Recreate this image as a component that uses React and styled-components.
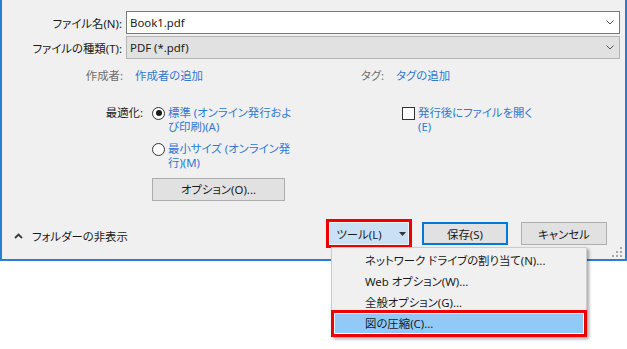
import React from 'react'
import styled, { createGlobalStyle } from 'styled-components'

const GlobalStyle = createGlobalStyle`
  html, body {
    margin: 0;
    padding: 0;
    background: #ffffff;
  }
  body {
    font-family: "Noto Sans", "Noto Sans CJK JP", sans-serif;
    font-size: 11.4px;
    color: #1a1a1a;
    font-feature-settings: "palt";
  }
`

const Page = styled.div`
  width: 627px;
  height: 349px;
  overflow: hidden;
  background: #ffffff;
`

const Dialog = styled.div`
  position: relative;
  width: 627px;
  height: 261px;
  box-sizing: border-box;
  background: #f0f0f0;
  border: 2px solid #2b7cd3;
  border-top: none;
  padding: 11px 5px 14px 0;
  display: flex;
  flex-direction: column;
`

const FieldGrid = styled.div`
  display: grid;
  grid-template-columns: 120px 1fr;
  column-gap: 4px;
  row-gap: 2px;
  align-items: center;
`

const Label = styled.label`
  text-align: right;
  white-space: nowrap;
  color: ${p => (p.$muted ? '#6d6d6d' : '#1a1a1a')};
`

const Field = styled.div`
  height: 23px;
  box-sizing: border-box;
  display: flex;
  align-items: center;
  justify-content: space-between;
  padding: 0 5px 0 3px;
  background: ${p => (p.$readonly ? '#e1e1e1' : '#ffffff')};
  border: 1px solid ${p => (p.$readonly ? '#b4b4b4' : '#7a7a7a')};
`

const MetaRow = styled.div`
  margin-top: 9px;
  display: grid;
  grid-template-columns: 121px 200px 37px 1fr;
  column-gap: 12px;
  line-height: 16px;
`

const Link = styled.span`
  color: #2f78cf;
  white-space: nowrap;
`

const OptionsRow = styled.div`
  margin-top: 22px;
  display: grid;
  grid-template-columns: 141px 241px 1fr;
  column-gap: 9px;
  line-height: 14px;
  align-items: start;
`

const RadioGroup = styled.div`
  display: flex;
  flex-direction: column;
  gap: 8px;
`

const Choice = styled.div`
  display: flex;
  align-items: flex-start;
  gap: 3px;
  white-space: nowrap;
`

const Radio = styled.span`
  flex: none;
  width: 13px;
  height: 13px;
  box-sizing: border-box;
  border: 1px solid #333333;
  border-radius: 50%;
  background: #ffffff;
  display: flex;
  align-items: center;
  justify-content: center;
  margin-top: 0.5px;
  &::after {
    content: '';
    width: 6px;
    height: 6px;
    border-radius: 50%;
    background: ${p => (p.$checked ? '#1a1a1a' : 'transparent')};
  }
`

const Checkbox = styled.span`
  flex: none;
  width: 13px;
  height: 13px;
  box-sizing: border-box;
  border: 1px solid #333333;
  background: #ffffff;
  margin-top: 0.5px;
`

const Button = styled.button`
  font: inherit;
  color: #1a1a1a;
  height: 23px;
  width: ${p => p.$width}px;
  box-sizing: border-box;
  padding: 0;
  background: ${p => (p.$active ? '#c9e0f5' : '#e1e1e1')};
  border: ${p =>
    p.$default ? '2px solid #0078d7' : p.$active ? '1px solid #e8f2fb' : '1px solid #adadad'};
  outline: ${p => (p.$marked ? '3px solid #ee0000' : 'none')};
  display: flex;
  align-items: center;
  justify-content: center;
  gap: ${p => (p.$active ? '17px' : '0')};
  padding-left: ${p => (p.$active ? '4px' : '0')};
`

const OptionButton = styled(Button)`
  margin-top: 8px;
`

const Footer = styled.div`
  margin-top: auto;
  display: flex;
  align-items: center;
  padding-right: 13px;
`

const Toggle = styled.div`
  display: flex;
  align-items: center;
  gap: 9px;
  padding-left: 12px;
  margin-top: 5px;
`

const Actions = styled.div`
  margin-left: auto;
  display: flex;
  gap: 13px;
`

const ToolWrap = styled.div`
  position: relative;
`

const Menu = styled.ul`
  position: absolute;
  top: calc(100% + 2px);
  left: 2px;
  width: 256px;
  margin: 0;
  padding: 2px;
  box-sizing: border-box;
  list-style: none;
  background: #f0f0f0;
  border: 1px solid #cccccc;
  box-shadow: 2px 2px 3px rgba(0, 0, 0, 0.35);
  z-index: 2;
`

const MenuItem = styled.li`
  height: 21px;
  line-height: 21px;
  padding-left: 31px;
  white-space: nowrap;
  background: ${p => (p.$selected ? '#91c9f7' : 'transparent')};
  box-shadow: ${p => (p.$selected ? 'inset 0 0 0 1px #eef6fd' : 'none')};
  outline: ${p => (p.$selected ? '3px solid #ee0000' : 'none')};
`

const Grip = styled.svg`
  position: absolute;
  right: 3px;
  bottom: 2px;
`

const ChevronDown = () => (
  <svg width="8" height="5" viewBox="0 0 8 5">
    <path d="M0.5 0.5 L4 4 L7.5 0.5" fill="none" stroke="#555" strokeWidth="1" />
  </svg>
)

const ChevronUp = () => (
  <svg width="9" height="6" viewBox="0 0 9 6">
    <path d="M1 5 L4.5 1.5 L8 5" fill="none" stroke="#3a3a3a" strokeWidth="1.8" />
  </svg>
)

const Caret = () => (
  <svg width="7" height="4" viewBox="0 0 7 4">
    <polygon points="0,0 7,0 3.5,4" fill="#333" />
  </svg>
)

const App = () => {
  return (
    <Page>
      <GlobalStyle />
      <Dialog>
        <FieldGrid>
          <Label>ファイル名(N):</Label>
          <Field>
            <span>Book1.pdf</span>
            <ChevronDown />
          </Field>
          <Label>ファイルの種類(T):</Label>
          <Field $readonly>
            <span>PDF (*.pdf)</span>
            <ChevronDown />
          </Field>
        </FieldGrid>

        <MetaRow>
          <Label $muted>作成者:</Label>
          <Link>作成者の追加</Link>
          <Label $muted>タグ:</Label>
          <Link>タグの追加</Link>
        </MetaRow>

        <OptionsRow>
          <Label>最適化:</Label>
          <div>
            <RadioGroup>
              <Choice>
                <Radio $checked />
                <Link>標準 (オンライン発行およ<br />び印刷)(A)</Link>
              </Choice>
              <Choice>
                <Radio />
                <Link>最小サイズ (オンライン発<br />行)(M)</Link>
              </Choice>
            </RadioGroup>
            <OptionButton $width={133}>オプション(O)...</OptionButton>
          </div>
          <Choice>
            <Checkbox />
            <Link>発行後にファイルを開く<br />(E)</Link>
          </Choice>
        </OptionsRow>

        <Footer>
          <Toggle>
            <ChevronUp />
            <span>フォルダーの非表示</span>
          </Toggle>
          <Actions>
            <ToolWrap>
              <Button $width={80} $active $marked>
                <span>ツール(L)</span>
                <Caret />
              </Button>
              <Menu>
                <MenuItem>ネットワーク ドライブの割り当て(N)...</MenuItem>
                <MenuItem>Web オプション(W)...</MenuItem>
                <MenuItem>全般オプション(G)...</MenuItem>
                <MenuItem $selected>図の圧縮(C)...</MenuItem>
              </Menu>
            </ToolWrap>
            <Button $width={86} $default>保存(S)</Button>
            <Button $width={86}>キャンセル</Button>
          </Actions>
        </Footer>

        <Grip width="10" height="10" viewBox="0 0 10 10">
          <rect x="8" y="0" width="2" height="2" fill="#a8a8a8" />
          <rect x="4" y="4" width="2" height="2" fill="#a8a8a8" />
          <rect x="8" y="4" width="2" height="2" fill="#a8a8a8" />
          <rect x="0" y="8" width="2" height="2" fill="#a8a8a8" />
          <rect x="4" y="8" width="2" height="2" fill="#a8a8a8" />
          <rect x="8" y="8" width="2" height="2" fill="#a8a8a8" />
        </Grip>
      </Dialog>
    </Page>
  )
}

export default App
